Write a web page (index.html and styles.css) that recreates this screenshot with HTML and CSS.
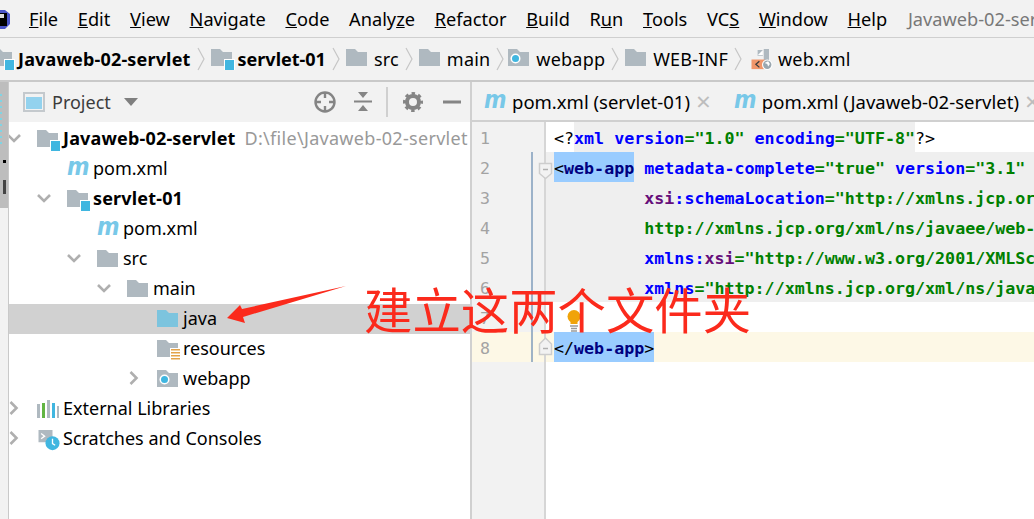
FILE: index.html
```html
<!DOCTYPE html>
<html lang="en">
<head>
<meta charset="utf-8">
<title>Javaweb-02-servlet</title>
<link rel="stylesheet" href="styles.css">
</head>
<body>
<svg class="defs" width="0" height="0" aria-hidden="true">
  <symbol id="folder" viewBox="0 0 24 21"><path d="M0 0h9l3 3h9v14H0z" fill="#afb9c0"/></symbol>
  <symbol id="folder-blue" viewBox="0 0 24 21"><path d="M0 0h9l3 3h9v14H0z" fill="#7cc4de"/></symbol>
  <symbol id="module" viewBox="0 0 24 21"><path d="M0 0h9l3 3h9v14H0z" fill="#afb9c0"/><path d="M13 10h11v11H13z" fill="#fff"/><path d="M14 11h9v10h-9z" fill="#40b6e0"/></symbol>
  <symbol id="res" viewBox="0 0 24 21"><path d="M0 0h9l3 3h9v14H0z" fill="#afb9c0"/><path d="M13 8h11v13H13z" fill="#fff"/><path d="M14 9h9v1.600h-9zM14 12h9v1.600h-9zM14 15h9v1.600h-9zM14 18h9v1.600h-9z" fill="#e3a34a"/></symbol>
  <symbol id="web" viewBox="0 0 24 21"><path d="M0 0h9l3 3h9v14H0z" fill="#afb9c0"/><circle cx="7.500" cy="9.500" r="5" fill="#fff"/><circle cx="7.500" cy="9.500" r="3.500" fill="#40b6e0"/></symbol>
  <symbol id="xmlfile" viewBox="0 0 24 24"><path d="M7 1h6v7H7zM14 0h6v14h-6z" fill="#afb9c0"/><path d="M13 1L7 7h6z" fill="#fff"/><path d="M0 12h15v11H0z" fill="#f0966a"/><path d="M9 14l-4 3.500 4 3.500" fill="none" stroke="#3c3c3c" stroke-width="1.500"/><circle cx="18" cy="18" r="6" fill="#fff"/><circle cx="18" cy="18" r="4.800" fill="#9aa7b0"/><path d="M15 16l3 1 1 3 2-3-2-3z" fill="#fff"/></symbol>
  <symbol id="chev" viewBox="0 0 14 9"><path d="M1 1l6 6 6-6" fill="none" stroke="#afafaf" stroke-width="2.600"/></symbol>
  <symbol id="chev-r" viewBox="0 0 10 14"><path d="M1.500 1l6 6-6 6" fill="none" stroke="#afafaf" stroke-width="2.600"/></symbol>
  <symbol id="sep" viewBox="0 0 8 24"><path d="M1 1l6 11-6 11" fill="none" stroke="#c6c6c6" stroke-width="1.200"/></symbol>
</svg>

<nav class="menubar">
  <svg class="logo" width="10" height="28" viewBox="0 0 10 28" aria-hidden="true"><path d="M-6 5L5 5l5 4v10l-5 5H-6z" fill="#4a55c8"/><path d="M-6 8H7v13H-6z" fill="#000"/><path d="M0 9h4v4H0z" fill="#ddd"/></svg>
  <div class="menus">
    <span class="mi m-file"><u>F</u>ile</span>
    <span class="mi"><u>E</u>dit</span>
    <span class="mi"><u>V</u>iew</span>
    <span class="mi"><u>N</u>avigate</span>
    <span class="mi"><u>C</u>ode</span>
    <span class="mi">Analy<u>z</u>e</span>
    <span class="mi"><u>R</u>efactor</span>
    <span class="mi"><u>B</u>uild</span>
    <span class="mi">R<u>u</u>n</span>
    <span class="mi"><u>T</u>ools</span>
    <span class="mi">VC<u>S</u></span>
    <span class="mi"><u>W</u>indow</span>
    <span class="mi"><u>H</u>elp</span>
    <span class="mi wintitle">Javaweb-02-servlet</span>
  </div>
</nav>

<div class="crumbs">
  <svg class="cic first"><use href="#module"/></svg><b class="cr-first">Javaweb-02-servlet</b>
  <svg class="sep"><use href="#sep"/></svg>
  <svg class="cic"><use href="#module"/></svg><b>servlet-01</b>
  <svg class="sep"><use href="#sep"/></svg>
  <svg class="cic"><use href="#folder"/></svg><span>src</span>
  <svg class="sep"><use href="#sep"/></svg>
  <svg class="cic"><use href="#folder"/></svg><span>main</span>
  <svg class="sep sep-tight"><use href="#sep"/></svg>
  <svg class="cic"><use href="#web"/></svg><span>webapp</span>
  <svg class="sep"><use href="#sep"/></svg>
  <svg class="cic"><use href="#folder"/></svg><span>WEB-INF</span>
  <svg class="sep sep-wide"><use href="#sep"/></svg>
  <svg class="cic"><use href="#xmlfile"/></svg><span>web.xml</span>
</div>

<div class="main">
  <div class="strip"><div class="strip-thumb"></div></div>

  <section class="project">
    <header class="proj-head">
      <svg class="proj-ic" width="22" height="20" viewBox="0 0 22 20" aria-hidden="true"><path d="M0 0h22v20H0z" fill="#c4c9cd"/><path d="M2 2h18v16H2z" fill="#f2f2f2"/><path d="M3 5h16v12H3z" fill="#93d2ee"/></svg>
      <span class="proj-title">Project</span>
      <svg class="tri" width="14" height="8" viewBox="0 0 14 8" aria-hidden="true"><path d="M0 0h14L7 8z" fill="#7f7f7f"/></svg>
      <div class="proj-tools">
        <svg width="22" height="22" viewBox="0 0 22 22" aria-hidden="true"><circle cx="11" cy="11" r="9.500" fill="none" stroke="#858585" stroke-width="2.400"/><path d="M11 1v6M11 15v6M1 11h6M15 11h6" stroke="#858585" stroke-width="2.400"/></svg>
        <svg width="18" height="20" viewBox="0 0 18 20" aria-hidden="true"><path d="M0 9.500h18" stroke="#858585" stroke-width="2"/><path d="M4 0h10L9 6zM4 19h10l-5-6z" fill="#858585"/></svg>
        <i class="tool-div"></i>
        <svg width="20" height="20" viewBox="0 0 20 20" aria-hidden="true"><circle cx="10" cy="10" r="6" fill="none" stroke="#858585" stroke-width="4"/><circle cx="10" cy="10" r="8.500" fill="none" stroke="#858585" stroke-width="3" stroke-dasharray="3.400 3.280" stroke-dashoffset="1.700"/></svg>
        <svg class="tool-min" width="18" height="4" viewBox="0 0 18 4" aria-hidden="true"><path d="M0 2h18" stroke="#858585" stroke-width="3"/></svg>
      </div>
    </header>
    <div class="tree">
      <div class="row l0"><svg class="tw"><use href="#chev"/></svg><svg class="ti"><use href="#module"/></svg><b>Javaweb-02-servlet</b><span class="path">D:\file\Javaweb-02-servlet</span></div>
      <div class="row l1 nochev"><span class="mvn">m</span><span>pom.xml</span></div>
      <div class="row l1"><svg class="tw"><use href="#chev"/></svg><svg class="ti"><use href="#module"/></svg><b>servlet-01</b></div>
      <div class="row l2 nochev"><span class="mvn">m</span><span>pom.xml</span></div>
      <div class="row l2"><svg class="tw"><use href="#chev"/></svg><svg class="ti"><use href="#folder"/></svg><span>src</span></div>
      <div class="row l3"><svg class="tw"><use href="#chev"/></svg><svg class="ti"><use href="#folder"/></svg><span>main</span></div>
      <div class="row l4 nochev sel"><svg class="ti"><use href="#folder-blue"/></svg><span>java</span></div>
      <div class="row l4 nochev"><svg class="ti"><use href="#res"/></svg><span>resources</span></div>
      <div class="row l4"><svg class="tw right"><use href="#chev-r"/></svg><svg class="ti"><use href="#web"/></svg><span>webapp</span></div>
      <div class="row l0"><svg class="tw right"><use href="#chev-r"/></svg><svg class="ti" viewBox="0 0 24 21"><path d="M0 4h3v14H0z" fill="#afb9c0"/><path d="M5 3h3v15H5z" fill="#62b543"/><path d="M10 0h3v18h-3z" fill="#afb9c0"/><path d="M15 3h3v15h-3z" fill="#40b6e0"/><path d="M20 6h2v12h-2z" fill="#afb9c0"/></svg><span>External Libraries</span></div>
      <div class="row l0"><svg class="tw right"><use href="#chev-r"/></svg><svg class="ti" viewBox="0 0 24 24"><path d="M0 0h16v14H0z" fill="#afb9c0"/><path d="M3 4l4 3-4 3" fill="none" stroke="#fff" stroke-width="1.500"/><circle cx="16" cy="15" r="8" fill="#40b6e0"/><path d="M16 10v5.500l3 2" fill="none" stroke="#fff" stroke-width="1.500"/></svg><span>Scratches and Consoles</span></div>
    </div>
  </section>

  <section class="editor">
    <div class="tabs">
      <div class="tab"><span class="mvn">m</span><span>pom.xml (servlet-01)</span><span class="x">×</span></div>
      <div class="tab tab2"><span class="mvn">m</span><span>pom.xml (Javaweb-02-servlet)</span><span class="x">×</span></div>
    </div>
    <div class="body">
      <div class="gutter">
        <div class="ln">1</div>
        <div class="ln">2</div>
        <div class="ln">3</div>
        <div class="ln">4</div>
        <div class="ln">5</div>
        <div class="ln">6</div>
        <div class="ln">7</div>
        <div class="ln cur">8</div>
      </div>
      <div class="code">
        <div class="cl"><span>&lt;?</span><span class="g"><span class="a">xml version</span><span class="v">="1.0"</span> <span class="a">encoding</span><span class="v">="UTF-8"</span></span><span>?&gt;</span></div>
        <div class="cl g"><span class="hl"><span class="pt">&lt;</span><span class="t">web-app</span></span> <span class="a">metadata-complete</span><span class="v">="true"</span> <span class="a">version</span><span class="v">="3.1"</span></div>
        <div class="cl g">         <span class="ns">xsi</span><span class="a">:schemaLocation</span><span class="v">="http://xmlns.jcp.org/xml/ns/javaee</span></div>
        <div class="cl g">         <span class="v">http://xmlns.jcp.org/xml/ns/javaee/web-app_3_1.xsd"</span></div>
        <div class="cl g">         <span class="a">xmlns:</span><span class="ns">xsi</span><span class="v">="http://www.w3.org/2001/XMLSchema-instance"</span></div>
        <div class="cl g">         <span class="a">xmlns</span><span class="v">="http://xmlns.jcp.org/xml/ns/javaee"&gt;</span></div>
        <div class="cl"></div>
        <div class="cl cur"><span class="hl"><span class="pt">&lt;/</span><span class="t">web-app</span><span class="pt">&gt;</span></span></div>
      </div>
    </div>
    <svg class="guide" width="24" height="212" viewBox="0 0 24 212" aria-hidden="true">
      <path d="M1 0v210" stroke="#7f9cbb" stroke-width="1.500"/>
      <path d="M8.500 11.500h12v10l-6 5-6-5z" fill="#f2f2f2" stroke="#cdcdcd" stroke-width="1.500"/>
      <path d="M12 17.500h5" stroke="#b0b0b0" stroke-width="1.500"/>
      <path d="M8.500 192l6-6 6 6v10.500h-12z" fill="#f2f2f2" stroke="#cdcdcd" stroke-width="1.500"/>
      <path d="M12 196.500h5" stroke="#b0b0b0" stroke-width="1.500"/>
    </svg>
  </section>
</div>

<svg class="bulb" width="14" height="22" viewBox="0 0 14 22" aria-hidden="true"><circle cx="7" cy="6.500" r="6.500" fill="#f0a30a"/><path d="M3.500 9h7v5h-7z" fill="#f0a30a"/><path d="M3 16h8M4 18.500h6M4 21h6" stroke="#9a9a9a" stroke-width="1.300"/></svg>
<svg class="arrow" width="124" height="40" viewBox="0 0 124 40" aria-hidden="true"><path d="M120 1L16 24l-2-4L1 33l18 5-2-6z" fill="#fb2a1c"/></svg>
<div class="note">建立这两个文件夹</div>
</body>
</html>
```

FILE: styles.css
```css
* { box-sizing: border-box; }
html, body { margin: 0; padding: 0; }
body {
  position: relative;
  width: 1034px;
  height: 519px;
  overflow: hidden;
  background: #fff;
  color: #000;
  font-family: "Noto Sans", "Open Sans", sans-serif;
  font-size: 18px;
  display: flex;
  flex-direction: column;
}
.defs { position: absolute; }

.menubar {
  height: 38px;
  flex: none;
  display: flex;
  align-items: center;
  background: #f2f2f2;
  border-bottom: 1px solid #cfcfcf;
}
.logo { flex: none; }
.menus {
  display: flex;
  align-items: center;
  gap: 19.7px;
  padding-left: 19px;
  white-space: nowrap;
  font-size: 18.2px;
}
.wintitle { color: #787878; margin-left: 1px; }

.crumbs {
  height: 44px;
  flex: none;
  display: flex;
  align-items: center;
  background: #f2f2f2;
  border-bottom: 2px solid #c9c9c9;
  white-space: nowrap;
  overflow: hidden;
}
.crumbs svg { flex: none; }
.crumbs span { margin-left: 4px; letter-spacing: .2px; }
.crumbs b { margin-left: 3px; }
.crumbs .cr-first { letter-spacing: .17px; }
.cic { width: 24px; height: 21px; }
.crumbs .first { margin-left: -9px; }
.sep { width: 8px; height: 24px; margin: 0 6px; }
.sep.sep-tight { margin-right: 4px; }
.sep.sep-wide { margin-right: 8px; }

.main { flex: 1; display: flex; min-height: 0; }
.strip {
  width: 9px;
  flex: none;
  background: #f2f2f2;
  border-right: 1px solid #c9c9c9;
}
.strip-thumb {
  height: 126px;
  background:
    linear-gradient(#000, #000) 3px 78px / 3px 3px no-repeat,
    linear-gradient(#444, #444) 3px 98px / 3px 14px no-repeat,
    repeating-linear-gradient(#7fd4e4 0 2px, transparent 2px 6px) 0 12px / 2px 54px no-repeat,
    #bdbdbd;
}

.project {
  width: 463px;
  flex: none;
  border-right: 2px solid #d0d0d0;
  display: flex;
  flex-direction: column;
}
.proj-head {
  height: 40px;
  flex: none;
  background: #f2f2f2;
  display: flex;
  align-items: center;
  padding-left: 14px;
}
.proj-title { margin-left: 7px; color: #3c3c3c; }
.tri { margin-left: 13px; }
.proj-tools {
  margin-left: auto;
  display: flex;
  align-items: center;
  gap: 18px;
  padding-right: 9px;
}
.tool-div { width: 2px; height: 30px; background: #d0d0d0; margin: 0 -3px 0 -4px; }
.tool-min { margin-left: 2px; }

.tree { flex: 1; background: #fff; padding-top: 2px; }
.row {
  height: 30px;
  padding-bottom: 2px;
  display: flex;
  align-items: center;
  white-space: nowrap;
  overflow: hidden;
}
.row b { letter-spacing: .17px; }
.row.l0 { padding-left: 0; }
.row.l1 { padding-left: 30px; }
.row.l2 { padding-left: 60px; }
.row.l3 { padding-left: 90px; }
.row.l4 { padding-left: 120px; }
.row.nochev { margin-left: 28px; }
.row.sel { background: #d1d1d1; margin-left: 0; padding-left: 148px; }
.tw { width: 14px; height: 9px; margin: 0 16px 0 -2px; flex: none; }
.tw.right { width: 10px; height: 14px; margin: 0 18px 0 0; }
.ti { width: 24px; height: 21px; margin: 5px 2px 0 0; flex: none; }
.path { color: #999; margin-left: 9px; letter-spacing: .3px; }
.mvn {
  width: 26px;
  height: 24px;
  flex: none;
  font-family: "DejaVu Sans", sans-serif;
  font-size: 24px;
  font-weight: 700;
  font-style: italic;
  color: #78c8e8;
  line-height: 22px;
  transform: scaleX(.9);
  transform-origin: 0 50%;
}

.editor { flex: 1; min-width: 0; display: flex; flex-direction: column; position: relative; }
.tabs {
  height: 40px;
  flex: none;
  background: #f2f2f2;
  border-bottom: 2px solid #d0d0d0;
  display: flex;
  align-items: center;
  padding-left: 12px;
  white-space: nowrap;
  overflow: hidden;
  font-size: 18.5px;
}
.tab { display: flex; align-items: center; flex: none; }
.tab .mvn { width: 28px; }
.tab2 { margin-left: 23px; }
.tab .x { color: #bdbdbd; margin-left: 6px; font-size: 26px; line-height: 1; }
.body { flex: 1; display: flex; min-height: 0; }
.gutter {
  width: 74px;
  flex: none;
  background: #f2f2f2;
  border-right: 2px solid #d6d6d6;
}
.ln {
  height: 30px;
  line-height: 34px;
  padding-left: 8px;
  font-family: "DejaVu Sans Mono", monospace;
  font-size: 16.6px;
  color: #a3a3a3;
}
.ln.cur { background: #fdf8e6; }
.code {
  flex: 1;
  min-width: 0;
  font-family: "DejaVu Sans Mono", monospace;
  font-size: 16.67px;
  overflow: hidden;
}
.cl {
  height: 30px;
  line-height: 34px;
  white-space: pre;
  padding-left: 8px;
  overflow: hidden;
}
.cl.g { background: #efefef; }
.cl .g { background: #efefef; display: inline-block; height: 30px; vertical-align: top; }
.cl.cur { background: #fdf8e6; }
.hl { background: #99ccff; display: inline-block; height: 30px; vertical-align: top; }
.a { color: #0000ff; font-weight: 700; }
.v { color: #008000; font-weight: 700; }
.ns { color: #660e7a; font-weight: 700; }
.t { color: #000080; font-weight: 700; }
.pt { color: #000; }

.guide { position: absolute; left: 59px; top: 70px; }
.bulb { position: absolute; left: 567px; top: 310px; }
.arrow { position: absolute; left: 226px; top: 285px; }
.note {
  position: absolute;
  left: 364px;
  top: 274px;
  font-family: "Noto Sans CJK SC", sans-serif;
  font-size: 48.4px;
  line-height: 68px;
  color: #fb2a1c;
  white-space: nowrap;
}
```
